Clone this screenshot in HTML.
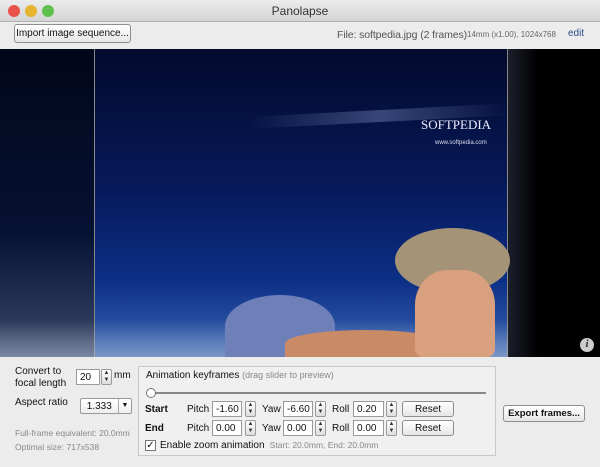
<!DOCTYPE html>
<html><head><style>
*{margin:0;padding:0;box-sizing:border-box}
body{width:600px;height:467px;overflow:hidden;background:#ececec;font-family:"Liberation Sans",sans-serif;font-size:10px;color:#111;position:relative}
.a{position:absolute;white-space:nowrap}
.title{left:0;top:0;width:600px;height:22px;background:linear-gradient(#ececec,#d4d4d4);border-bottom:1px solid #b0b0b0;text-align:center;line-height:22px;font-size:12px;color:#333}
.dot{width:12px;height:12px;border-radius:50%;top:5px}
.btn{background:linear-gradient(#fff,#e6e6e6);border:1px solid #8e8e8e;border-radius:3px;text-align:center;font-size:10px;color:#111}
.inp{background:#fff;border:1px solid #9a9a9a;height:16px;font-size:10px;padding-left:3px;line-height:15px}
.step{width:11px;height:16px;border:1px solid #9a9a9a;border-radius:2px;background:linear-gradient(#fff,#ddd);font-size:6px;text-align:center;line-height:7px;color:#333}
.g{color:#888;font-size:9px}
</style></head><body>
<div class="a title">Panolapse</div>
<div class="a dot" style="left:8px;background:#e9524b"></div>
<div class="a dot" style="left:25px;background:#e6b431"></div>
<div class="a dot" style="left:42px;background:#5fc04d"></div>

<div class="a btn" style="left:14px;top:24px;width:117px;height:19px;line-height:18px">Import image sequence...</div>
<div class="a" style="left:337px;top:29px;font-size:10.5px;color:#555;letter-spacing:-0.1px">File: softpedia.jpg (2 frames)</div>
<div class="a" style="left:467px;top:30px;font-size:8px;color:#666">14mm (x1.00), 1024x768</div>
<div class="a" style="left:568px;top:28px;font-size:10px;color:#2a4f8a">edit</div>

<div class="a" style="left:0;top:49px;width:600px;height:308px;background:#000"></div>
<div class="a" style="left:0;top:49px;width:94px;height:308px;background:linear-gradient(#02061a,#061233 60%,#3a4a6a)"></div>
<div class="a" style="left:94px;top:49px;width:414px;height:308px;background:linear-gradient(#020a2c 0%,#07195a 45%,#0c2f86 75%,#3a66b4 100%);border-left:1px solid #888;border-right:1px solid #888"></div>
<div class="a" style="left:508px;top:49px;width:30px;height:308px;background:linear-gradient(90deg,#1b1f2a,#000)"></div>
<div class="a" style="left:250px;top:110px;width:260px;height:12px;background:linear-gradient(90deg,transparent,rgba(150,170,220,.35),transparent);transform:rotate(-3deg)"></div>
<div class="a" style="left:421px;top:117px;font-family:'Liberation Serif',serif;font-size:13px;color:#eef">SOFTPEDIA</div>
<div class="a" style="left:435px;top:140px;font-size:6px;color:#dde">www.softpedia.com</div>
<div class="a" style="left:0;top:320px;width:508px;height:37px;background:linear-gradient(transparent,rgba(190,200,220,.5))"></div>
<div class="a" style="left:225px;top:295px;width:110px;height:62px;border-radius:50% 50% 0 0;background:#6f7fb8"></div>
<div class="a" style="left:285px;top:330px;width:160px;height:27px;border-radius:50% 50% 0 0;background:#c98a66"></div>
<div class="a" style="left:395px;top:228px;width:115px;height:65px;border-radius:50%;background:#a59378"></div>
<div class="a" style="left:415px;top:270px;width:80px;height:87px;border-radius:40% 40% 10% 10%;background:#d9a07f"></div>
<div class="a" style="left:580px;top:338px;width:14px;height:14px;border-radius:50%;background:#ccc;color:#222;font:bold italic 10px 'Liberation Serif',serif;text-align:center;line-height:14px">i</div>

<div class="a" style="left:15px;top:366px;line-height:12px">Convert to<br>focal length</div>
<div class="a inp" style="left:76px;top:369px;width:24px">20</div>
<div class="a step" style="left:101px;top:369px">▲<br>▼</div>
<div class="a" style="left:114px;top:370px">mm</div>
<div class="a" style="left:15px;top:397px">Aspect ratio</div>
<div class="a inp" style="left:80px;top:398px;width:52px;border-radius:2px;background:linear-gradient(#fff,#eee)">&nbsp;1.333</div>
<div class="a" style="left:118px;top:399px;width:13px;height:14px;border-left:1px solid #aaa;font-size:7px;text-align:center;line-height:14px">▼</div>
<div class="a g" style="left:15px;top:428px;font-size:8.5px">Full-frame equivalent: 20.0mm</div>
<div class="a g" style="left:15px;top:442px;font-size:8.5px">Optimal size: 717x538</div>

<div class="a" style="left:138px;top:366px;width:358px;height:90px;border:1px solid #c8c8c8;background:#f0f0f0"></div>
<div class="a" style="left:146px;top:370px">Animation keyframes <span class="g">(drag slider to preview)</span></div>
<div class="a" style="left:150px;top:392px;width:336px;height:2px;background:#888"></div>
<div class="a" style="left:146px;top:388px;width:10px;height:10px;border-radius:50%;border:1px solid #777;background:#fff"></div>
<div class="a" style="left:145px;top:404px;font-weight:bold">Start</div>
<div class="a" style="left:145px;top:423px;font-weight:bold">End</div>
<div class="a" style="left:187px;top:404px">Pitch</div>
<div class="a" style="left:187px;top:423px">Pitch</div>
<div class="a inp" style="left:212px;top:401px;width:30px">-1.60</div>
<div class="a step" style="left:245px;top:401px">▲<br>▼</div>
<div class="a inp" style="left:212px;top:420px;width:30px">0.00</div>
<div class="a step" style="left:245px;top:420px">▲<br>▼</div>
<div class="a" style="left:262px;top:404px">Yaw</div>
<div class="a" style="left:262px;top:423px">Yaw</div>
<div class="a inp" style="left:283px;top:401px;width:30px">-6.60</div>
<div class="a step" style="left:315px;top:401px">▲<br>▼</div>
<div class="a inp" style="left:283px;top:420px;width:30px">0.00</div>
<div class="a step" style="left:315px;top:420px">▲<br>▼</div>
<div class="a" style="left:332px;top:404px">Roll</div>
<div class="a" style="left:332px;top:423px">Roll</div>
<div class="a inp" style="left:353px;top:401px;width:31px">0.20</div>
<div class="a step" style="left:386px;top:401px">▲<br>▼</div>
<div class="a inp" style="left:353px;top:420px;width:31px">0.00</div>
<div class="a step" style="left:386px;top:420px">▲<br>▼</div>
<div class="a btn" style="left:402px;top:401px;width:52px;height:16px;line-height:15px">Reset</div>
<div class="a btn" style="left:402px;top:420px;width:52px;height:16px;line-height:15px">Reset</div>
<div class="a" style="left:145px;top:440px;width:11px;height:11px;border:1px solid #777;background:#fff;font-size:10px;line-height:9px;text-align:center">✓</div>
<div class="a" style="left:160px;top:440px">Enable zoom animation <span class="g" style="font-size:8.5px">&nbsp;Start: 20.0mm, End: 20.0mm</span></div>

<div class="a btn" style="left:503px;top:405px;width:82px;height:17px;line-height:16px;font-weight:bold;font-size:9.5px">Export frames...</div>
</body></html>
